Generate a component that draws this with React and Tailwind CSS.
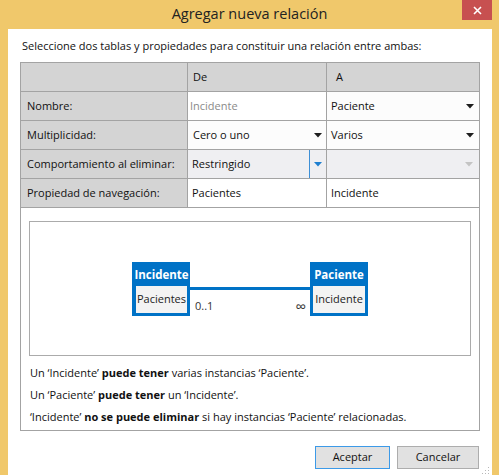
import React from "react";

function Arrow({ color = "#1e1e1e" }) {
  return (
    <svg width="8" height="5" viewBox="0 0 8 5" className="shrink-0">
      <polygon points="0,0 8,0 4,4.5" fill={color} />
    </svg>
  );
}

function Entity({ title, prop, padClass }) {
  return (
    <div className={`w-[58px] h-[54px] shrink-0 bg-[#0072c6] flex flex-col ${padClass} pb-[3px]`}>
      <div className="h-[24px] shrink-0 flex items-center justify-center text-white font-bold text-[11.5px] leading-none pt-[2px]">
        {title}
      </div>
      <div className="flex-1 bg-[#f3f3f3] flex items-center justify-center text-[11px] text-[#222]">
        {prop}
      </div>
    </div>
  );
}

export default function App() {
  const label = "h-[29px] border-b border-r border-[#a3a3a3] bg-[#d4d4d4] flex items-center pl-[6px]";
  const cell = "h-[29px] border-b border-[#a3a3a3] flex items-center";
  return (
    <div className="w-[499px] h-[475px] bg-[#f0c86b] flex flex-col font-['Open_Sans',sans-serif] text-[11px] text-[#111] overflow-hidden">
      <div className="relative h-[29px] shrink-0 flex items-center justify-center">
        <span className="text-[14.5px] text-[#222] pb-[1px]">Agregar nueva relación</span>
        <div className="absolute right-[7px] top-0 w-[30px] h-[20px] bg-[#c75050] flex items-center justify-center">
          <svg width="9" height="9" viewBox="0 0 9 9">
            <path d="M1 1 L8 8 M8 1 L1 8" stroke="white" strokeWidth="1.6" />
          </svg>
        </div>
      </div>

      <div className="relative flex-1 ml-[8px] mr-[7px] bg-white px-[12px] pt-[9px] flex flex-col">
        <p className="h-[16px] leading-[16px] pl-[2px]">
          Seleccione dos tablas y propiedades para constituir una relación entre ambas:
        </p>

        <div className="mt-[8px] border border-[#a3a3a3] flex flex-col">
          <div className="grid grid-cols-[167px_139px_1fr]">
            <div className={label}></div>
            <div className={`${cell} border-r bg-[#d4d4d4] pl-[5px]`}>De</div>
            <div className={`${cell} bg-[#d4d4d4] pl-[9px]`}>A</div>

            <div className={label}>Nombre:</div>
            <div className={`${cell} border-r bg-white pl-[2px] text-[#8a8a8a]`}>Incidente</div>
            <div className={`${cell} bg-[#fcfcfc] pl-[4px] pr-[5px] justify-between`}>
              <span>Paciente</span>
              <Arrow />
            </div>

            <div className={label}>Multiplicidad:</div>
            <div className={`${cell} border-r bg-[#fcfcfc] pl-[5px] pr-[4px] justify-between`}>
              <span>Cero o uno</span>
              <Arrow />
            </div>
            <div className={`${cell} bg-[#fcfcfc] pl-[4px] pr-[5px] justify-between`}>
              <span>Varios</span>
              <Arrow />
            </div>

            <div className={label}>Comportamiento al eliminar:</div>
            <div className={`${cell} border-r bg-[#efeff2] pl-[4px]`}>
              <span className="flex-1">Restringido</span>
              <div className="w-[1px] self-stretch bg-[#3d8fd6]"></div>
              <div className="w-[16px] flex items-center justify-center">
                <Arrow color="#1e7fd0" />
              </div>
            </div>
            <div className={`${cell} bg-[#efeff2] pr-[6px] justify-end`}>
              <Arrow color="#c4c4c4" />
            </div>

            <div className={label}>Propiedad de navegación:</div>
            <div className={`${cell} border-r bg-white pl-[4px]`}>Pacientes</div>
            <div className={`${cell} bg-white pl-[4px]`}>Incidente</div>
          </div>

          <div className="mt-[13px] mx-[8px] h-[135px] border border-[#ababab] flex items-center justify-center">
            <div className="flex items-start">
              <Entity title="Incidente" prop="Pacientes" padClass="pl-[4px] pr-[3px]" />
              <div className="w-[120px] h-[54px] flex flex-col">
                <div className="h-[3px] shrink-0 mt-[25px] bg-[#0072c6]"></div>
                <div className="flex justify-between items-center mt-[9px] pl-[5px] pr-[4px] text-[11px] text-[#333] h-[16px]">
                  <span>0..1</span>
                  <span className="text-[15px] leading-none">∞</span>
                </div>
              </div>
              <Entity title="Paciente" prop="Incidente" padClass="pl-[3px] pr-[3px]" />
            </div>
          </div>

          <div className="mt-[6px] pb-[2px] pl-[9px] flex flex-col">
            <p className="leading-[22px]">
              Un ‘Incidente’ <b>puede tener</b> varias instancias ‘Paciente’.
            </p>
            <p className="leading-[22px]">
              Un ‘Paciente’ <b>puede tener</b> un ‘Incidente’.
            </p>
            <p className="leading-[22px]">
              ‘Incidente’ <b>no se puede eliminar</b> si hay instancias ‘Paciente’ relacionadas.
            </p>
          </div>
        </div>

        <div className="mt-[15px] flex justify-end gap-[7px] pr-[1px]">
          <div className="w-[75px] h-[23px] bg-[#e1e1e1] border border-[#3c9ae8] flex items-center justify-center">
            Aceptar
          </div>
          <div className="w-[82px] h-[23px] bg-[#e1e1e1] border border-[#adadad] flex items-center justify-center">
            Cancelar
          </div>
        </div>

        <svg width="8" height="8" viewBox="0 0 8 8" className="absolute right-[2px] bottom-0">
          <rect x="6" y="0" width="1" height="1" fill="#b8b8b8" />
          <rect x="6" y="3" width="1" height="1" fill="#b8b8b8" />
          <rect x="3" y="3" width="1" height="1" fill="#b8b8b8" />
          <rect x="6" y="6" width="1" height="1" fill="#b8b8b8" />
          <rect x="3" y="6" width="1" height="1" fill="#b8b8b8" />
          <rect x="0" y="6" width="1" height="1" fill="#b8b8b8" />
        </svg>
      </div>
    </div>
  );
}
